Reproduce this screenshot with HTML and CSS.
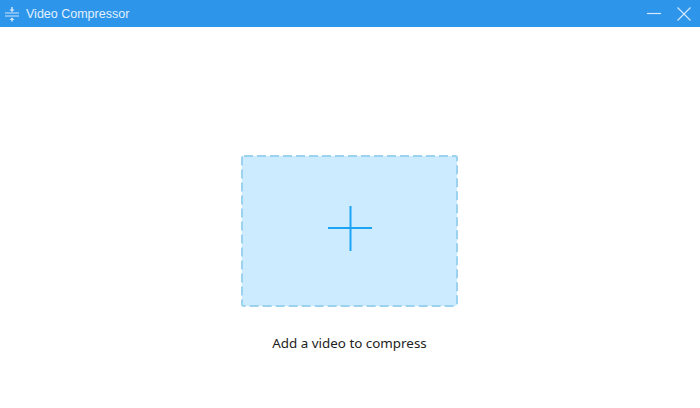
FILE: index.html
```html
<!DOCTYPE html>
<html lang="en">
<head>
    <meta charset="UTF-8">
    <title>Video Compressor</title>
    <link rel="stylesheet" href="styles.css">
</head>
<body>
    <div class="titlebar">
        <div class="title">
            <svg class="app-icon" width="16" height="16" viewBox="0 0 16 16">
                <path d="M1 7h14M1 10h14" stroke="#cfe6fb" stroke-width="1" fill="none"/>
                <path d="M8 1v3.500M8 12.500v3" stroke="#cfe6fb" stroke-width="1.500" fill="none"/>
                <path d="M5.500 3.500h5L8 6zM5.500 14h5L8 11.500z" fill="#cfe6fb"/>
            </svg>
            <span>Video Compressor</span>
        </div>
        <div class="window-buttons">
            <svg width="14" height="14" viewBox="0 0 14 14">
                <path d="M0 6.500h14" stroke="#d6eafc" stroke-width="1.200"/>
            </svg>
            <svg width="14" height="14" viewBox="0 0 14 14">
                <path d="M.5.500l13 13M13.500.500l-13 13" stroke="#d6eafc" stroke-width="1.100"/>
            </svg>
        </div>
    </div>

    <div class="content">
        <svg class="dropzone" width="217" height="152" viewBox="0 0 217 152">
            <rect x="1" y="1" width="215" height="150" rx="2" fill="#cdebff" stroke="#9ad2f0" stroke-width="2" stroke-dasharray="9 4"/>
            <path d="M87 73h44M109.500 51v45" stroke="#1ba3f5" stroke-width="2" fill="none"/>
        </svg>
        <p class="hint">Add a video to compress</p>
    </div>
</body>
</html>
```

FILE: styles.css
```css
body {
    margin: 0;
    height: 408px;
    overflow: hidden;
    background-color: #fff;
    font-family: "Noto Sans", Tahoma, sans-serif;
}
.titlebar {
    display: flex;
    justify-content: space-between;
    align-items: center;
    height: 27px;
    padding: 0 9px 0 4px;
    background-color: #2d95ea;
    color: #e3f1fd;
}
.title {
    display: flex;
    align-items: center;
    gap: 6px;
    font-family: "Liberation Sans", Arial, sans-serif;
    font-size: 12.500px;
}
.app-icon {
    display: block;
}
.window-buttons {
    display: flex;
    align-items: center;
    gap: 16px;
}
.window-buttons svg {
    display: block;
}
.content {
    display: flex;
    flex-direction: column;
    align-items: center;
    padding: 128px 1px 0 0;
}
.dropzone {
    display: block;
}
.hint {
    margin: 26px 0 0;
    font-size: 13.400px;
    line-height: 20px;
    color: #222;
}
```
